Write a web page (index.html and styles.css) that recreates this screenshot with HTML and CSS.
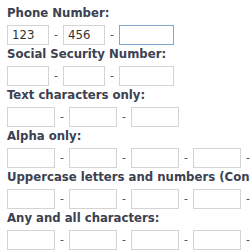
FILE: index.html
```html
<!DOCTYPE html>
<html lang="en">
<head>
  <meta charset="UTF-8">
  <title>Masked Inputs</title>
  <link rel="stylesheet" href="styles.css">
</head>
<body>
  <form class="mask-form">
    <!-- Phone -->
    <div class="field">
      <label>Phone Number:</label>
      <div class="parts">
        <input type="text" class="short" value="123">
        <span class="dash">-</span>
        <input type="text" class="short" value="456">
        <span class="dash">-</span>
        <input type="text" class="long focused">
      </div>
    </div>

    <!-- SSN -->
    <div class="field">
      <label>Social Security Number:</label>
      <div class="parts">
        <input type="text" class="short">
        <span class="dash">-</span>
        <input type="text" class="short">
        <span class="dash">-</span>
        <input type="text" class="long">
      </div>
    </div>

    <div class="field">
      <label>Text characters only:</label>
      <div class="parts">
        <input type="text">
        <span class="dash">-</span>
        <input type="text">
        <span class="dash">-</span>
        <input type="text">
      </div>
    </div>

    <div class="field">
      <label>Alpha only:</label>
      <div class="parts">
        <input type="text">
        <span class="dash">-</span>
        <input type="text">
        <span class="dash">-</span>
        <input type="text">
        <span class="dash">-</span>
        <input type="text">
        <span class="dash">-</span>
        <input type="text">
      </div>
    </div>

    <div class="field">
      <label>Uppercase letters and numbers (Converted):</label>
      <div class="parts">
        <input type="text">
        <span class="dash">-</span>
        <input type="text">
        <span class="dash">-</span>
        <input type="text">
        <span class="dash">-</span>
        <input type="text">
        <span class="dash">-</span>
        <input type="text">
      </div>
    </div>

    <div class="field">
      <label>Any and all characters:</label>
      <div class="parts">
        <input type="text">
        <span class="dash">-</span>
        <input type="text">
        <span class="dash">-</span>
        <input type="text">
        <span class="dash">-</span>
        <input type="text">
        <span class="dash">-</span>
        <input type="text">
      </div>
    </div>
  </form>
</body>
</html>
```

FILE: styles.css
```css
/* General */
body {
  margin: 0;
  padding: 5px 7px;
  background: #fff;
  color: #3b4150;
  font-family: "DejaVu Sans Condensed", "DejaVu Sans", sans-serif;
  overflow: hidden;
}

.field {
  margin-bottom: 1px;
}

.field label {
  display: block;
  font-weight: bold;
  font-size: 13px;
  line-height: 16px;
  margin-bottom: 3px;
  white-space: nowrap;
}

.parts {
  display: flex;
  align-items: center;
  white-space: nowrap;
  height: 21px;
}

.parts input {
  box-sizing: border-box;
  flex: none;
  width: 48px;
  height: 20px;
  margin: 0;
  padding: 1px 4px;
  border: 1px solid #d4d4d4;
  border-radius: 0;
  font-family: "DejaVu Sans Condensed", "DejaVu Sans", sans-serif;
  font-size: 13px;
  color: #333;
  outline: none;
}

.parts input.short {
  width: 42px;
}

.parts input.long {
  width: 55px;
}

.parts input.focused {
  border-color: #7fa8cf;
}

.dash {
  flex: none;
  width: 14px;
  text-align: center;
  font-size: 12px;
  color: #555;
}
```
